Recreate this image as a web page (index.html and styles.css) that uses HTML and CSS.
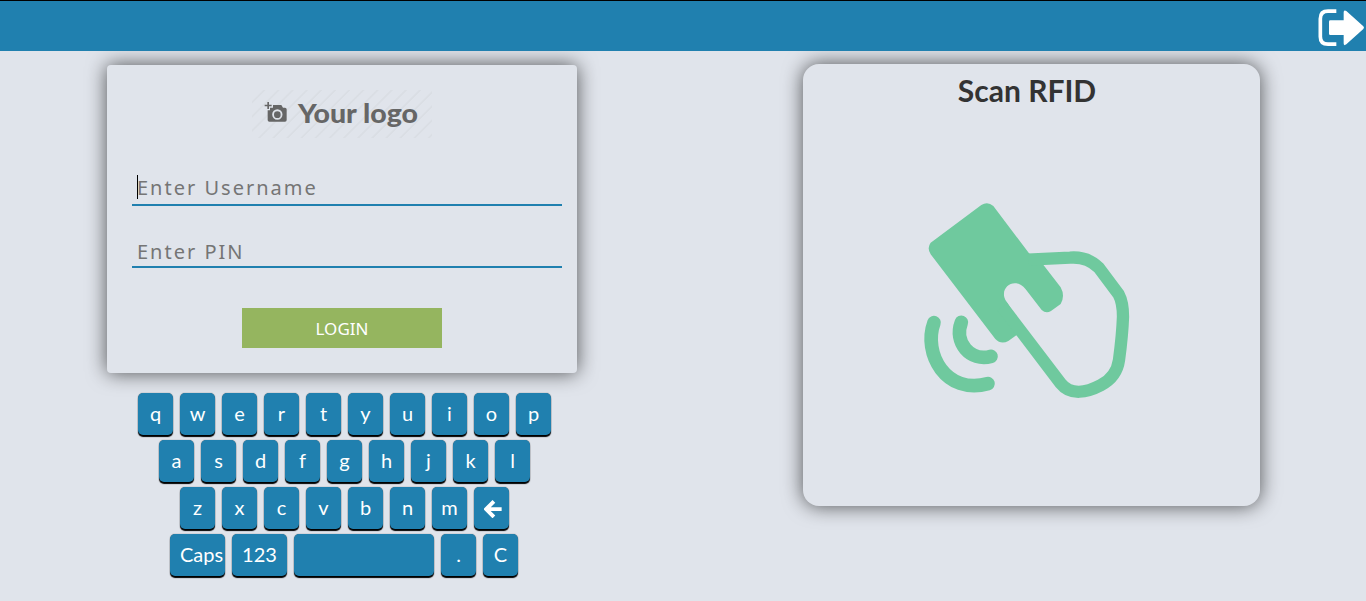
FILE: index.html
```html
<!DOCTYPE html>
<html lang="en">
<head>
<meta charset="utf-8">
<title>Login</title>
<link rel="stylesheet" href="styles.css">
</head>
<body>
<header class="topbar">
  <svg class="logout" viewBox="0 0 147 120" role="img" aria-label="Log out">
    <path d="M58 12.500H33Q10 12.500 10 35V89Q10 111.500 33 111.500H58" fill="none" stroke="#fff" stroke-width="11"/>
    <path d="M40 40H80V16Q80 8 88 12L139 58Q143 62 139 66L88 112Q80 118 80 109V84H40Q36 84 36 80V44Q36 40 40 40Z" fill="#fff"/>
  </svg>
</header>
<main class="content">
  <section class="left">
    <form class="card login">
      <div class="logo">
        <svg class="camera" viewBox="0 0 66 60"><path d="M7 0h5v8h8v5h-8v8H7v-8H-1V8h8z" fill="#666"/><path fill-rule="evenodd" d="M24 9H49L54 17H60Q65 17 65 22V54Q65 59 60 59H13Q8 59 8 54V25H15V17H24ZM37 22A15.500 15.500 0 1 0 37 53A15.500 15.500 0 1 0 37 22ZM37 28A10 10 0 1 1 37 48A10 10 0 1 1 37 28Z" fill="#666"/></svg>
        <svg class="logo-text" width="122" height="34"><text x="0" y="24" textLength="120" lengthAdjust="spacingAndGlyphs">Your logo</text></svg>
      </div>
      <div class="field user"><span class="caret"></span><span class="placeholder">Enter Username</span></div>
      <div class="field pin"><span class="placeholder">Enter PIN</span></div>
      <button class="submit" type="button"><span>LOGIN</span></button>
    </form>
    <div class="keyboard">
      <div class="row"><b class="key">q</b><b class="key">w</b><b class="key">e</b><b class="key">r</b><b class="key">t</b><b class="key">y</b><b class="key">u</b><b class="key">i</b><b class="key">o</b><b class="key">p</b></div>
      <div class="row"><b class="key">a</b><b class="key">s</b><b class="key">d</b><b class="key">f</b><b class="key">g</b><b class="key">h</b><b class="key">j</b><b class="key">k</b><b class="key">l</b></div>
      <div class="row"><b class="key">z</b><b class="key">x</b><b class="key">c</b><b class="key">v</b><b class="key">b</b><b class="key">n</b><b class="key">m</b><b class="key"><svg class="back" viewBox="0 0 51 51"><path d="M28 4L6 26L28 48M8 26H50" fill="none" stroke="#fff" stroke-width="11"/></svg></b></div>
      <div class="row bottom"><b class="key wide caps">Caps</b><b class="key wide">123</b><b class="key space"></b><b class="key">.</b><b class="key">C</b></div>
    </div>
  </section>
  <section class="card scan">
    <h1 class="scan-title">Scan RFID</h1>
    <svg class="rfid" viewBox="0 0 750 660">
      <path d="M92 158L244 45Q263 33 280 48L387 190L431 226L482 292Q496 318 482 342L453 363Q438 372 425 360L377 298C350 262 304 285 313 322Q315 331 322 338L360 400L350 435L325 453Q303 465 286 447L92 193Q80 174 92 158Z" fill="#6fc99e"/>
      <path d="M384 209L510 203Q562 199 596 233L656 313Q669 337 669 380Q667 435 657 510Q650 561 602 586C562 607 512 618 482 580L307 350" fill="none" stroke="#6fc99e" stroke-width="37"/>
      <path d="M102 398C68 490 138 616 264 581M184 397C161 457 211 516 273 499" fill="none" stroke="#6fc99e" stroke-width="41" stroke-linecap="round"/>
    </svg>
  </section>
</main>
</body>
</html>
```
FILE: styles.css
```css
* { box-sizing: border-box; }
body { margin: 0; height: 601px; overflow: hidden; background: #e0e4eb; font-family: Lato, sans-serif; }
.topbar { position: relative; z-index: 1; height: 51px; border-top: 1px solid #000; background: #2080af; display: flex; justify-content: flex-end; padding-top: 6px; }
.logout { width: 49px; height: 40px; display: block; }
.content { display: flex; align-items: flex-start; padding-left: 107px; }
.left { width: 470px; margin-right: 226px; padding-top: 14px; }
.card { background: #e0e4eb; box-shadow: 0 0 20px rgba(0, 0, 0, .65); }
.login { height: 308px; border-radius: 4px; padding: 25px 15px 0 25px; }
.logo { width: 180px; height: 48px; margin-left: 120px; display: flex; padding: 12px 0 0 13px; background: repeating-linear-gradient(135deg, transparent 0 7.500px, #dadee4 8.500px 9.500px, transparent 10px); }
.camera { width: 22px; height: 20px; flex: none; overflow: visible; }
.logo-text { margin: -3px 0 0 11px; flex: none; font: 900 26px Lato, sans-serif; fill: #666; overflow: visible; }
.field { width: 430px; border-bottom: 2px solid #2080af; display: flex; align-items: center; color: #757575; font: 20px/24px "Noto Sans", sans-serif; }
.user { height: 38px; margin-top: 30px; padding: 2px 0 0 5px; }
.pin { height: 32px; margin-top: 30px; padding: 0 0 0 5px; }
.caret { width: 1px; height: 24px; background: #000; margin-right: -1px; }
.placeholder { letter-spacing: 2px; padding-top: 1px; }
.submit { display: block; width: 200px; height: 40px; margin: 40px 0 0 110px; padding: 1px 0 0; border: 0; background: #95b55f; color: #fff; font: 17px/40px "Noto Sans", sans-serif; }
.keyboard { display: flex; flex-direction: column; gap: 5px; padding: 20px 0 0 5px; }
.row { display: flex; justify-content: center; gap: 7px; }
.bottom { padding-right: 1px; }
.key { width: 35px; height: 42px; border-radius: 5px; background: #2080af; color: #fff; font: 400 20px/41px Lato, sans-serif; text-align: center; box-shadow: 0 2px 1px #000, 0 0 1px #555; }
.wide { width: 55px; }
.caps { padding-left: 8px; }
.space { width: 140px; }
.back { width: 18px; height: 18px; display: block; margin: 13px 0 0 10px; }
.scan { width: 457px; height: 442px; margin-top: 13px; border-radius: 16px; padding: 6px 9px 0 0; }
.scan-title { margin: 0; text-align: center; font: 700 30px/40px Lato, sans-serif; color: #333; }
.rfid { display: block; width: 250px; height: 220px; margin: 80px 0 0 97px; }
```
